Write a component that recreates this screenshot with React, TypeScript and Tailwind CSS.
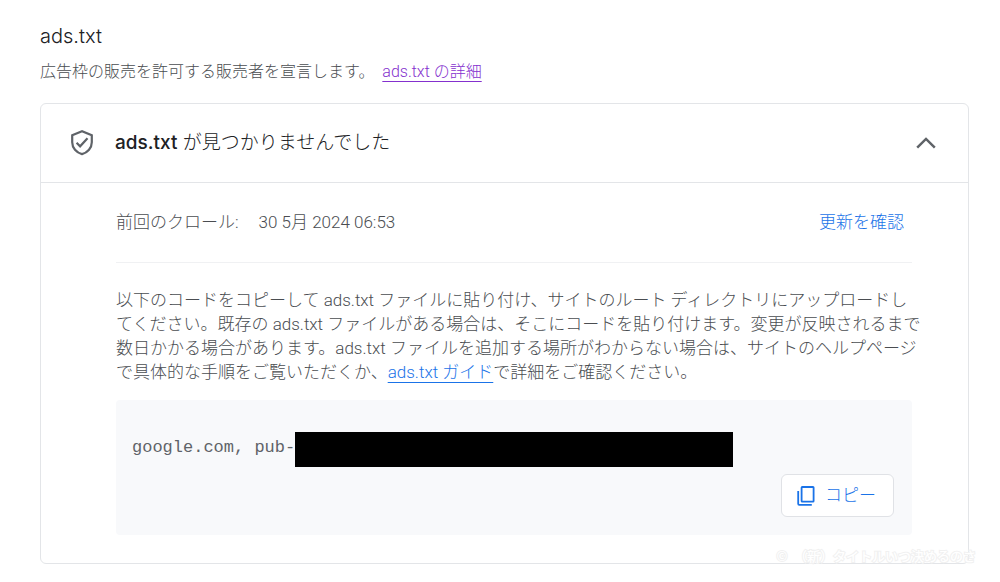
import { useState } from "react";

const publisherPrefix = "google.com, pub-";

function ShieldCheckIcon() {
  return (
    <svg viewBox="0 0 24 28" className="h-7 w-6 shrink-0" fill="none" stroke="#5f6368" strokeWidth="2.2">
      <path d="M12 2.2 2.2 6.2v7c0 5.6 4.2 10.4 9.8 11.9 5.6-1.5 9.8-6.3 9.8-11.9v-7L12 2.2z" />
      <path d="m6.6 13.8 3.5 3.5 7.4-8" />
    </svg>
  );
}

function ChevronUpIcon() {
  return (
    <svg viewBox="0 0 20 12" className="h-3 w-5" fill="none" stroke="#5f6368" strokeWidth="2.5">
      <path d="M1.2 10.6 10 1.9l8.8 8.7" />
    </svg>
  );
}

function CopyIcon() {
  return (
    <svg viewBox="0 0 18 20" className="h-5 w-[18px]" fill="none" stroke="#1a73e8" strokeWidth="1.8">
      <rect x="4.6" y="1" width="12" height="14.6" rx="0.6" />
      <path d="M1.2 5v12.8c0 .6.4 1 1 1h12.6" />
    </svg>
  );
}

export default function App() {
  const [open, setOpen] = useState(true);

  return (
    <main className="relative min-h-screen bg-white pt-6 pr-[31px] pb-4 pl-10 font-['Roboto','Noto_Sans_CJK_JP',sans-serif] text-[17px] font-light text-[#4a4d51]">
      <h1 className="font-['Inter','Noto_Sans_CJK_JP',sans-serif] text-xl leading-6 font-light text-[#202124]">
        ads.txt
      </h1>
      <p className="mt-3 text-base leading-6">
        広告枠の販売を許可する販売者を宣言します。{" "}
        <a href="#details" className="ml-1 text-[#8430ce] underline underline-offset-4">
          ads.txt の詳細
        </a>
      </p>

      <section className="mt-[19px] rounded-md border border-[#e3e5e8]">
        <h2>
          <button
            type="button"
            aria-expanded={open}
            onClick={() => setOpen(!open)}
            className="flex h-[78px] w-full items-center pr-8 pl-[29px] text-left font-['Inter','Noto_Sans_CJK_JP',sans-serif] text-[19px] text-[#202124]"
          >
            <ShieldCheckIcon />
            <span className="ml-[21px] flex-1">
              <span className="font-medium">ads.txt</span> が見つかりませんでした
            </span>
            <ChevronUpIcon />
          </button>
        </h2>

        {open && (
          <div className="border-t border-[#e3e5e8] pr-14 pb-7 pl-[75px]">
            <div className="flex h-20 items-center border-b border-[#f0f1f3] pr-2">
              <span>前回のクロール:</span>
              <time dateTime="2024-05-30T06:53" className="ml-5">
                30 5月 2024 06:53
              </time>
              <button type="button" className="ml-auto text-[#1a73e8]">
                更新を確認
              </button>
            </div>

            <p className="mt-[25px] leading-6 whitespace-nowrap">
              以下のコードをコピーして ads.txt ファイルに貼り付け、サイトのルート ディレクトリにアップロードし
              <br />
              てください。既存の ads.txt ファイルがある場合は、そこにコードを貼り付けます。変更が反映されるまで
              <br />
              数日かかる場合があります。ads.txt ファイルを追加する場所がわからない場合は、サイトのヘルプページ
              <br />
              で具体的な手順をご覧いただくか、
              <a href="#guide" className="text-[#1a73e8] underline underline-offset-4">
                ads.txt ガイド
              </a>
              で詳細をご確認ください。
            </p>

            <div className="mt-4 rounded bg-[#f8f9fb] pt-8 pr-[18px] pb-[18px] pl-4">
              <div className="flex h-[35px]">
                <code className="font-['Liberation_Mono',monospace] text-[17px] leading-8 font-normal whitespace-pre text-[#5f6368]">
                  {publisherPrefix}
                </code>
                <span className="h-full w-[438px] bg-black" />
              </div>
              <div className="mt-[7px] flex justify-end">
                <button
                  type="button"
                  className="flex h-[43px] items-center gap-2.5 rounded-md border border-[#e0e2e6] bg-white pr-[17px] pl-[15px] text-[#1a73e8]"
                >
                  <CopyIcon />
                  コピー
                </button>
              </div>
            </div>
          </div>
        )}
      </section>

      <small className="absolute right-6 bottom-4 font-['Noto_Sans_CJK_JP',sans-serif] text-[13px] leading-5 font-medium whitespace-pre text-white [-webkit-text-stroke:2px_#f1f1f1] [paint-order:stroke]">
        ©　（新）タイトルいつ決めるのさ
      </small>
    </main>
  );
}
